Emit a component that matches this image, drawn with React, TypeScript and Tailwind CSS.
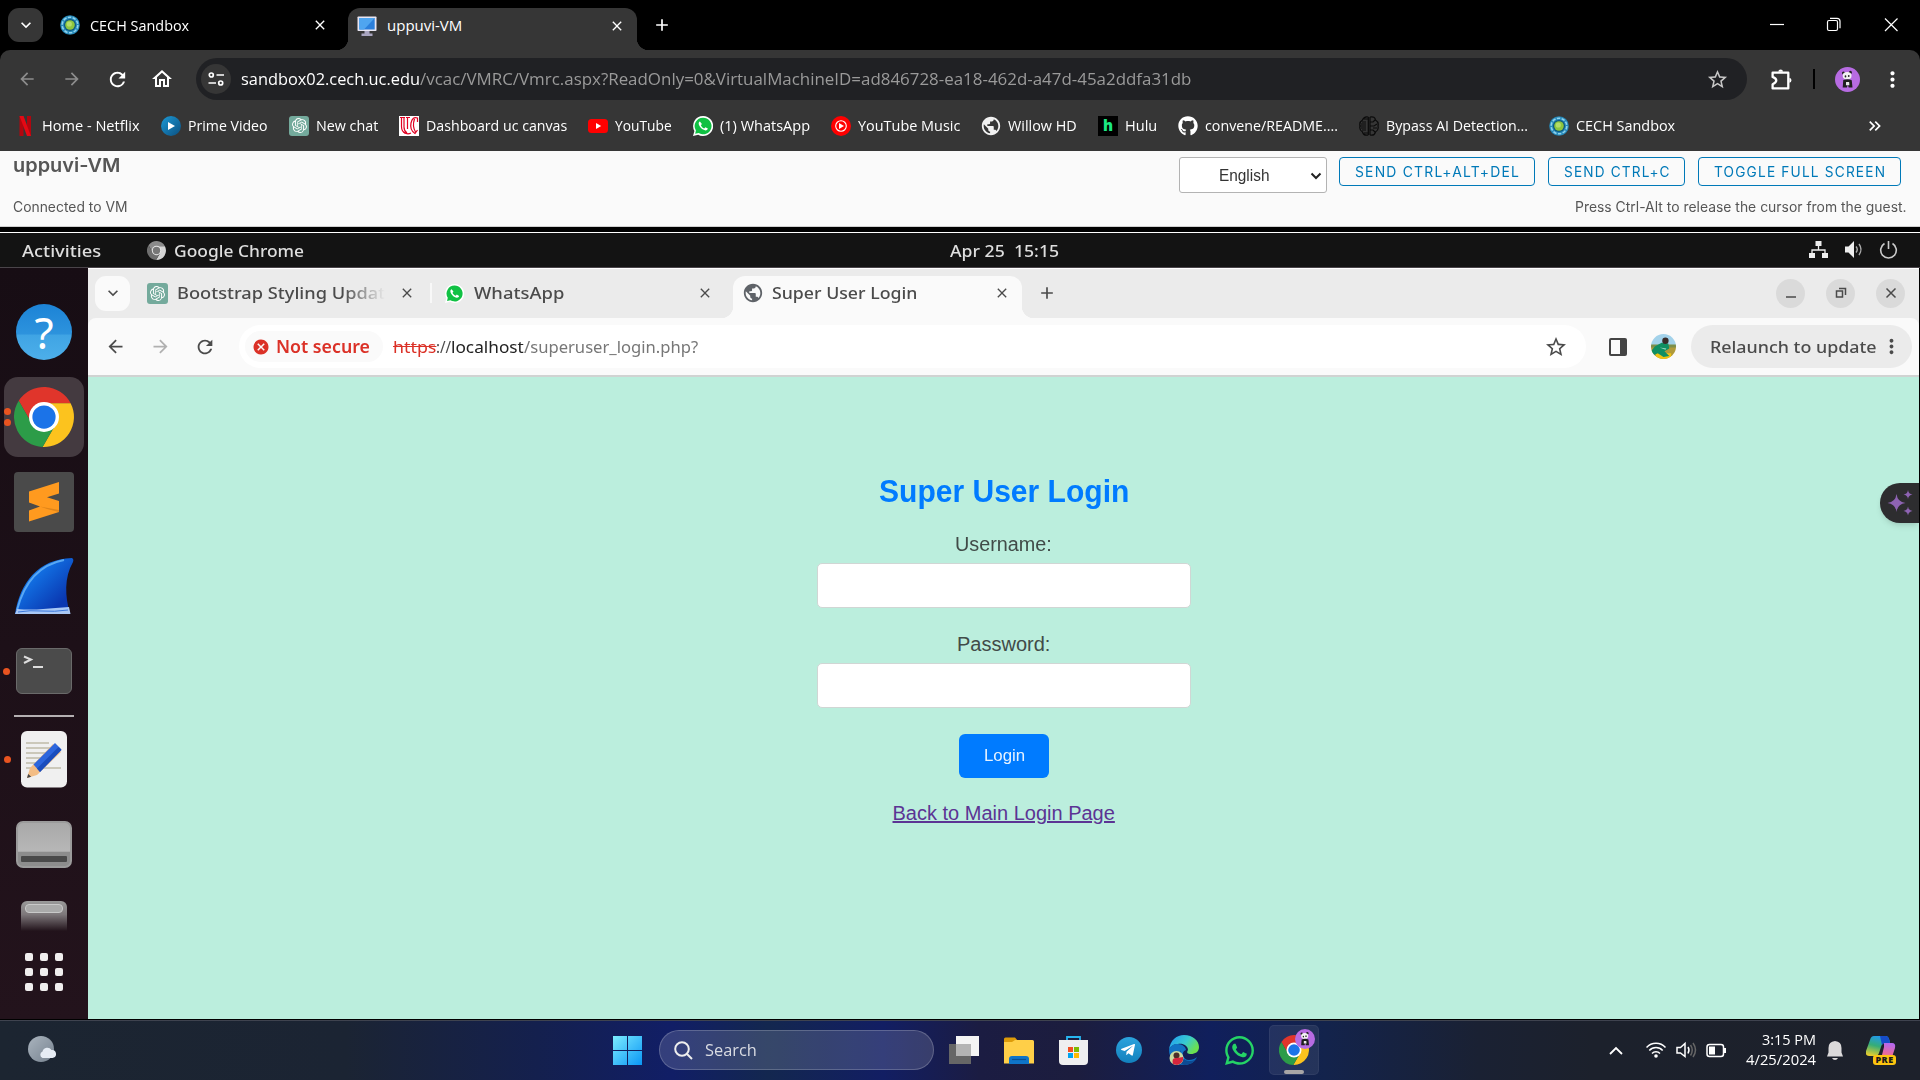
import React, { useLayoutEffect, useRef, useState } from "react";
import {
  MdArrowBack,
  MdArrowForward,
  MdRefresh,
  MdOutlineHome,
  MdStarBorder,
  MdMoreVert,
  MdClose,
  MdAdd,
  MdPublic,
  MdKeyboardArrowDown,
  MdCancel,
  MdKeyboardDoubleArrowRight,
} from "react-icons/md";
import { SiOpenai } from "react-icons/si";
import { FaGithub, FaWhatsapp, FaTelegramPlane } from "react-icons/fa";

/* One line of text, condensed or widened to the given width. */
function T({ w, className = "", children }: { w: number; className?: string; children: React.ReactNode }) {
  const ref = useRef<HTMLSpanElement>(null);
  const [s, setS] = useState(1);
  useLayoutEffect(() => {
    if (ref.current) setS(w / ref.current.offsetWidth);
  }, [w]);
  return (
    <span className={"block shrink-0 whitespace-pre " + className} style={{ width: w }}>
      <span ref={ref} className="inline-block origin-left" style={{ transform: `scaleX(${s})` }}>
        {children}
      </span>
    </span>
  );
}

function ChromeLogo({ className, mono }: { className: string; mono?: boolean }) {
  return (
    <svg viewBox="0 0 48 48" className={className}>
      <path d="M45.3 13A24 24 0 0 0 3.8 11.03L14.47 29.5 24 24V13Z" fill={mono ? "#8b8b8b" : "#e0352b"} />
      <path d="M45.3 13A24 24 0 0 1 22.87 47.97L33.5 29.5 24 24V13Z" fill={mono ? "#d5d5d5" : "#fcc31e"} />
      <path d="M22.87 47.97A24 24 0 0 1 3.8 11.03L14.47 29.5 24 24 33.5 29.5Z" fill={mono ? "#6f6f6f" : "#2c9c48"} />
      <circle cx="24" cy="24" r="12" fill={mono ? "#e8e8e8" : "#fff"} />
      <circle cx="24" cy="24" r="9.3" fill={mono ? "#777" : "#1b73e8"} />
    </svg>
  );
}

function CechLogo() {
  return (
    <svg viewBox="0 0 20 20" className="size-5 shrink-0">
      <circle cx="10" cy="10" r="9.8" fill="#2588b8" />
      <circle cx="10" cy="10" r="7.8" fill="none" stroke="#8ed2ee" strokeWidth="1.6" strokeDasharray="3.5 1.4" />
      <circle cx="10" cy="10" r="6" fill="#0e567c" />
      <circle cx="10" cy="10" r="4.8" fill="#8dc63f" />
      <circle cx="9.3" cy="9" r="2.6" fill="#b4dc6a" />
    </svg>
  );
}

function Panda({ className }: { className: string }) {
  return (
    <svg viewBox="0 0 26 26" className={className}>
      <circle cx="13" cy="13" r="13" fill="#b76be2" />
      <circle cx="8.8" cy="6.3" r="1.6" fill="#222" />
      <circle cx="16" cy="5.6" r="1.6" fill="#222" />
      <ellipse cx="12.6" cy="9.2" rx="4.6" ry="3.9" fill="#f2f2f2" />
      <ellipse cx="10.9" cy="9.8" rx="0.9" ry="1.1" fill="#222" />
      <ellipse cx="14.3" cy="9.3" rx="0.9" ry="1.1" fill="#222" />
      <path d="M8.6 13.600q5-2 8.800.2l.8 7.400h-4l-.8-3-1 3H8z" fill="#1f1f1f" />
      <path d="M11.500 15.500h3.200l.3 3.500h-3.600z" fill="#e8e8e8" />
    </svg>
  );
}

function WhatsBadge({ className }: { className: string }) {
  return (
    <svg viewBox="0 0 24 24" className={className}>
      <path d="M12 0a12 12 0 0 0-10.300 18L0 24l6.200-1.600A12 12 0 1 0 12 0Z" fill="#fff" />
      <path d="M12 2a10 10 0 0 0-8.500 15.300L2.600 21.400l4.200-1A10 10 0 1 0 12 2Z" fill="#10c143" />
      <path d="M8.300 6.500c-.8.2-1.600 1.300-1.500 2.600.3 3.800 4.600 7.900 8.300 8.200 1.400 0 2.500-.9 2.700-2.200l-2.900-1.700-1.400 1.500c-1.900-.8-3.300-2.200-4-3.900l1.200-1.500z" fill="#fff" />
    </svg>
  );
}

const Gpt = ({ className }: { className: string }) => (
  <span className={"flex shrink-0 items-center justify-center bg-[#74aa9c] text-white " + className}>
    <SiOpenai className="size-[15px]" />
  </span>
);

const bookmarks: { t: string; w: number; icon: React.ReactNode }[] = [
  {
    t: "Home - Netflix", w: 98,
    icon: (
      <svg viewBox="0 0 20 20" className="size-5 shrink-0">
        <path d="M4.500 0h4v20l-4 .2zM12 0h4v20.200l-4-.2z" fill="#b1060f" />
        <path d="M4.500 0h4L16 20.200l-4-.3z" fill="#e50914" />
      </svg>
    ),
  },
  {
    t: "Prime Video", w: 80,
    icon: (
      <svg viewBox="0 0 20 20" className="size-5 shrink-0">
        <defs>
          <linearGradient id="pv" x1="0" y1="0" x2="1" y2="1">
            <stop offset="0" stopColor="#1c9ad6" />
            <stop offset="1" stopColor="#0b4f80" />
          </linearGradient>
        </defs>
        <circle cx="10" cy="10" r="10" fill="url(#pv)" />
        <path d="M7 6l7 4-7 4z" fill="#fff" />
      </svg>
    ),
  },
  { t: "New chat", w: 62, icon: <Gpt className="size-5 rounded-[3px]" /> },
  {
    t: "Dashboard uc canvas", w: 141,
    icon: (
      <svg viewBox="0 0 20 20" className="size-5 shrink-0">
        <path d="M0 0h20v20H0z" fill="#fff" />
        <path d="M2.500 1.500v9q0 5 4 7M5 2v9q0 4 3 6M8.500 2v11M1 1.500h5M7 1.500h4" fill="none" stroke="#e00122" strokeWidth="1.200" />
        <path d="M18.500 6V2q-5-2-6.500 5T16 17.500l2.500-3.500M15.500 3q-2.500 7 1 13M5 16q3 3 7 1" fill="none" stroke="#e00122" strokeWidth="1.200" />
      </svg>
    ),
  },
  {
    t: "YouTube", w: 57,
    icon: (
      <svg viewBox="0 0 20 20" className="size-5 shrink-0">
        <rect x="0" y="3" width="20" height="14" rx="3.500" fill="#f00" />
        <path d="M8 7l5.200 3L8 13z" fill="#fff" />
      </svg>
    ),
  },
  { t: "(1) WhatsApp", w: 90, icon: <WhatsBadge className="size-5 shrink-0" /> },
  {
    t: "YouTube Music", w: 102,
    icon: (
      <svg viewBox="0 0 20 20" className="size-5 shrink-0">
        <circle cx="10" cy="10" r="10" fill="#f00" />
        <circle cx="10" cy="10" r="5.300" fill="none" stroke="#fff" strokeWidth="1.100" />
        <path d="M8 7l5 3-5 3z" fill="#fff" />
      </svg>
    ),
  },
  { t: "Willow HD", w: 69, icon: <MdPublic className="-ml-px size-[22px] shrink-0 -mr-px text-[#f1f1f1]" /> },
  {
    t: "Hulu", w: 32,
    icon: (
      <span className="flex size-5 shrink-0 items-center justify-center bg-black font-['Open_Sans',sans-serif] text-[15px] leading-none font-extrabold text-[#1ce783]">
        h
      </span>
    ),
  },
  { t: "convene/README....", w: 133, icon: <FaGithub className="size-5 shrink-0 text-white" /> },
  {
    t: "Bypass AI Detection...", w: 142,
    icon: (
      <svg viewBox="0 0 20 20" className="size-5 shrink-0" fill="none" stroke="#0b0b0b" strokeWidth="1.200">
        <path d="M9.300 1v18M9.300 1Q5 0 3.500 4 0 6 1 10q-1 4 2.500 6 1 4 5.800 3M3 6h4M1 10h6M3 14h4M5 3h4M5 17h4M2 8h5M2 12h5" />
        <path d="M11 1v18M11 1q5-1 5.500 3 3.500 2 2.500 6 1 4-2.500 6-1 4-5.500 3M11 6h3l2-2M11 10h4l3-2M11 14h3l2 2M14 12h4" />
      </svg>
    ),
  },
  { t: "CECH Sandbox", w: 99, icon: <CechLogo /> },
];

function HostBrowser() {
  return (
    <header className="h-[151px] bg-black font-['Open_Sans',sans-serif] text-white">
      <div className="flex h-[50px] items-center">
        <button className="ml-2 flex h-[34px] w-[35px] items-center justify-center rounded-[11px] bg-[#363636]">
          <MdKeyboardArrowDown className="size-5" />
        </button>
        <div className="ml-[17px] flex w-[274px] items-center">
          <CechLogo />
          <T w={99} className="ml-[10px] text-[15px]">CECH Sandbox</T>
          <MdClose className="ml-[123px] size-4 shrink-0" />
        </div>
        <div className="relative ml-[14px] mt-2 flex h-[42px] w-[289px] items-center rounded-t-[12px] bg-[#363636] pb-[7px]">
          <span className="absolute -left-3 bottom-0 size-3 bg-[radial-gradient(circle_at_0_0,transparent_12px,#363636_12.500px)]" />
          <span className="absolute -right-3 bottom-0 size-3 bg-[radial-gradient(circle_at_100%_0,transparent_12px,#363636_12.500px)]" />
          <svg viewBox="0 0 20 20" className="ml-[9px] size-5 shrink-0">
            <rect x="0.500" y="0.500" width="19" height="14.500" rx="0.800" fill="#e9e6f2" />
            <rect x="2.300" y="2" width="15.400" height="11.500" fill="#2b7fdc" />
            <path d="M2.300 2h15.400L7 13.500H2.300z" fill="#4fa5f0" />
            <path d="M7.500 15h5v2.500h3V20h-11v-2.500h3z" fill="#a9a5c0" />
          </svg>
          <T w={75} className="ml-[10px] text-[15px]">uppuvi-VM</T>
          <MdClose className="ml-[147px] size-4 shrink-0" />
        </div>
        <MdAdd className="ml-[15px] size-5" />
        <svg viewBox="0 0 140 20" className="ml-auto mr-[20px] h-5 w-[140px]" fill="none" stroke="#fff" strokeWidth="1.200">
          <path d="M10 9.500h14" />
          <rect x="67.500" y="5.500" width="10" height="10" rx="1.500" />
          <path d="M70 3.300h7q3 0 3 3v7" />
          <path d="M125 3.500l12.500 12.500M137.500 3.500L125 16" />
        </svg>
      </div>
      <div className="h-[101px] rounded-t-[10px] bg-[#363636]">
        <div className="flex h-[58px] items-center">
          <MdArrowBack className="ml-[17px] size-5 text-[#8d8d8d]" />
          <MdArrowForward className="ml-[25px] size-5 text-[#8d8d8d]" />
          <MdRefresh className="ml-[24px] size-[23px]" />
          <MdOutlineHome className="ml-[21px] size-[24px]" />
          <div className="ml-[22px] flex h-[42px] w-[1551px] items-center rounded-full bg-[#202124]">
            <span className="ml-[5px] flex size-[30px] items-center justify-center rounded-full bg-[#363636]">
              <svg viewBox="0 0 18 18" className="size-[18px]" fill="none" stroke="#fff" strokeWidth="1.700">
                <circle cx="4.300" cy="5" r="2" />
                <path d="M9.500 5H17M1.500 13H9" />
                <circle cx="13.700" cy="13" r="2" />
              </svg>
            </span>
            <T w={179} className="ml-[10px] text-[17px]">sandbox02.cech.uc.edu</T>
            <T w={771} className="text-[17px] text-[#9a9a9a]">
              /vcac/VMRC/Vmrc.aspx?ReadOnly=0&amp;VirtualMachineID=ad846728-ea18-462d-a47d-45a2ddfa31db
            </T>
            <MdStarBorder className="ml-auto mr-[18px] size-[23px] text-[#c7c7c7]" />
          </div>
          <svg viewBox="0 0 22 22" className="ml-[23px] size-[23px]" fill="none" stroke="#fff" strokeWidth="2.200" strokeLinejoin="round">
            <path d="M2.500 4.500H17.500V19.500H2.500V15.500Q6 14 6 12T2.500 8.500Z" />
            <path d="M8 3.500a2.200 2 0 0 1 4.400 0zM18.500 9.500a2 2.200 0 0 1 0 4.500z" fill="#fff" stroke="none" />
          </svg>
          <span className="ml-[20px] h-5 w-[2px] bg-black" />
          <Panda className="ml-[20px] size-[25px]" />
          <MdMoreVert className="ml-[20px] size-[25px]" />
        </div>
        <div className="flex h-[35px] items-center gap-[21px] pl-[15px] text-[15px]">
          {bookmarks.map((b) => (
            <span key={b.t} className="flex items-center gap-[7px]">
              {b.icon}
              <T w={b.w}>{b.t}</T>
            </span>
          ))}
          <MdKeyboardDoubleArrowRight className="ml-auto mr-[35px] size-5" />
        </div>
      </div>
    </header>
  );
}

function VmHeader() {
  const btn = "flex h-[29px] items-center rounded-[4px] border border-[#0079b8] pl-[15px]";
  return (
    <section className="flex h-[76px] justify-between border-b border-[#cfcfcf] bg-[#fafafa] pl-[13px] pr-[13px] font-['Inter',sans-serif] text-[#565656]">
      <div className="flex flex-col">
        <T w={107} className="mt-px h-7 text-[19px] leading-7 font-semibold">uppuvi-VM</T>
        <T w={115} className="mt-[17px] text-[14px] leading-5">Connected to VM</T>
      </div>
      <div className="flex flex-col items-end pt-[6px]">
        <div className="mr-[6px] flex h-[36px] items-start text-[#0079b8]">
          <div className="flex h-[36px] w-[148px] items-center rounded-[3px] border border-[#b3b3b3] bg-white pl-[39px] text-[#333]">
            <T w={50} className="mt-[2px] font-['Liberation_Sans',sans-serif] text-[16px]">English</T>
            <svg viewBox="0 0 12 8" className="ml-auto mr-1 mt-[2px] h-2 w-3" fill="none" stroke="#222" strokeWidth="2">
              <path d="M1.500 1.500L6 6l4.500-4.500" />
            </svg>
          </div>
          <button className={btn + " ml-3 w-[196px]"}>
            <T w={165} className="text-left text-[14px] tracking-[1.200px]">SEND CTRL+ALT+DEL</T>
          </button>
          <button className={btn + " ml-[13px] w-[137px]"}>
            <T w={107} className="text-left text-[14px] tracking-[1.200px]">SEND CTRL+C</T>
          </button>
          <button className={btn + " ml-[13px] w-[203px]"}>
            <T w={172} className="text-left text-[14px] tracking-[1.200px]">TOGGLE FULL SCREEN</T>
          </button>
        </div>
        <T w={332} className="mt-1 text-[14px] leading-5">Press Ctrl-Alt to release the cursor from the guest.</T>
      </div>
    </section>
  );
}

function UbuntuBar() {
  return (
    <div className="flex h-[35px] items-center border-b border-[#4a454a] bg-[#131313] font-['Noto_Sans',sans-serif] text-[17px] leading-none font-medium text-[#dedede]">
      <T w={79} className="ml-[22px]">Activities</T>
      <ChromeLogo mono className="ml-[46px] size-[19px]" />
      <T w={130} className="ml-[8px]">Google Chrome</T>
      <T w={109} className="ml-[646px]">Apr 25  15:15</T>
      <svg viewBox="0 0 92 20" className="ml-auto mr-[19px] h-5 w-[92px]" fill="#eee">
        <path d="M6.500 1h6v5h-6zM0 13h6v5H0zM13 13h6v5h-6z" />
        <path d="M9.500 6v4M3 13v-3h13v3" fill="none" stroke="#eee" strokeWidth="1.300" />
        <path d="M36 6.500h3.500L45 1v17l-5.500-5.500H36z" />
        <path d="M47 6.500q2.500 3 0 6M50 4q4 5.500 0 11" fill="none" stroke="#aaa" strokeWidth="1.400" />
        <path d="M75.500 3.500a7.800 7.800 0 1 0 8 0M79.500 1v8" fill="none" stroke="#ccc" strokeWidth="1.600" />
      </svg>
    </div>
  );
}

function Dock() {
  return (
    <nav className="flex h-[751px] w-[88px] shrink-0 flex-col items-center bg-linear-to-b from-[#170d14] to-[#23131c]">
      <div className="mt-[36px] flex size-14 shrink-0 items-center justify-center rounded-full bg-[linear-gradient(#1c83d6_0%,#2d93dd_54%,#3fa4e4_55%,#4dafea_100%)] font-['Noto_Sans',sans-serif] text-[44px] leading-none text-white">
        ?
      </div>
      <div className="relative mt-[17px] flex size-20 shrink-0 items-center justify-center rounded-[14px] bg-[#443a40]">
        <span className="absolute left-0 top-[31px] size-[7px] rounded-full bg-[#e95420]" />
        <span className="absolute left-0 top-[42px] size-[7px] rounded-full bg-[#e95420]" />
        <ChromeLogo className="size-[60px]" />
      </div>
      <svg viewBox="0 0 60 60" className="mt-[15px] size-[60px] shrink-0">
        <rect width="60" height="60" rx="4" fill="#4a4a4a" />
        <path d="M15 19.500L45 10v11.500L33 25.200 45 29v11L15 49.500V38.500l11-4L15 30.500z" fill="#ff9a1f" />
        <path d="M26 34.500L33 37l12 3V38z" fill="#e0851a" />
      </svg>
      <svg viewBox="0 0 60 58" className="mt-[25px] h-[58px] w-[60px] shrink-0">
        <defs>
          <linearGradient id="fin" x1="0" y1="0" x2="1" y2="1">
            <stop offset="0.300" stopColor="#1273e6" />
            <stop offset="0.800" stopColor="#0a37b0" />
          </linearGradient>
        </defs>
        <path d="M1 57C6 26 24 2 58 1q2 1 1 4c-9 16-8 34-3 52z" fill="url(#fin)" />
        <path d="M3 53C10 26 24 8 50 3" fill="none" stroke="#58a8f4" strokeWidth="2" />
        <path d="M1 57l2-5q14 1 26 0t26-2l1.500 7z" fill="#a9c8f5" />
        <path d="M4 55q12-2 24-1t26-1" fill="none" stroke="#3b78dc" strokeWidth="1" />
      </svg>
      <div className="relative mt-[33px] h-[46px] w-14 shrink-0 rounded-[6px] border border-[#6a6a6a] bg-[#4b4b4b]">
        <span className="absolute -left-[14px] top-[19px] size-[7px] rounded-full bg-[#e95420]" />
        <svg viewBox="0 0 24 16" className="ml-[6px] mt-[6px] h-4 w-6" fill="none" stroke="#ddd" strokeWidth="2">
          <path d="M1 1.500l7 3-7 3.500M10 12h10" />
        </svg>
      </div>
      <div className="mt-[21px] h-[2px] w-[60px] shrink-0 bg-[#b5b0b2]" />
      <div className="relative mt-[14px] shrink-0">
        <span className="absolute -left-[17px] top-[25px] size-[7px] rounded-full bg-[#e95420]" />
        <svg viewBox="0 0 46 57" className="h-[57px] w-[46px]">
          <rect width="46" height="56.500" rx="6" fill="#f0f0f0" />
          <path d="M5 12h23M5 17h26M5 22h24M5 27h18M5 32h14M5 37h35" stroke="#cbc8ba" strokeWidth="2.200" />
          <path d="M6 47l3-10L32 13l8 8-24 23z" fill="#f3bd85" />
          <path d="M12.500 33.500L34 12l6.500 6.500L19 41z" fill="#2d66dd" />
          <path d="M16 37.500L37.500 16l3 3L19 41z" fill="#1a4dbd" />
          <path d="M6 47l1.200-4 3 2.800z" fill="#444" />
        </svg>
      </div>
      <div className="mt-[33px] flex h-[47px] w-14 shrink-0 flex-col justify-end rounded-[7px] border-2 border-[#9b9b9b] bg-[linear-gradient(#a9a9a9_0%,#b7b7b7_66%,#8d8d8d_67%)] px-[3px] pb-[4px]">
        <span className="h-[6px] rounded-[1px] bg-[#4a4a4a]" />
      </div>
      <div className="mt-[33px] h-[30px] w-[46px] shrink-0 rounded-t-[6px] bg-[linear-gradient(#9a9a9a,#7d777a_45%,#22131b)] px-[4px] pt-[3px]">
        <div className="h-[9px] rounded-[4px] border border-[#c9c9c9] bg-[#aaa]" />
      </div>
      <div className="mt-[22px] grid shrink-0 grid-cols-3 gap-[7px]">
        {Array.from({ length: 9 }, (_, i) => (
          <span key={i} className="size-2 rounded-[2px] bg-[#f0eeee]" />
        ))}
      </div>
    </nav>
  );
}

function GuestBrowser() {
  return (
    <div className="flex w-[1831px] flex-col border-t border-white font-['Noto_Sans',sans-serif] text-[17px] font-medium text-[#4b4b4b]">
      <div className="flex h-[49px] items-center bg-[#ebebeb] pb-px">
        <span className="ml-[7px] flex size-[35px] shrink-0 items-center justify-center rounded-[11px] bg-[#fafafa]">
          <MdKeyboardArrowDown className="size-5" />
        </span>
        <Gpt className="ml-[17px] size-[21px] rounded-[3px]" />
        <T w={208} className="ml-[9px] mask-r-from-80% mask-r-to-100%">Bootstrap Styling Updat</T>
        <MdClose className="ml-[14px] size-4 shrink-0" />
        <span className="ml-[15px] h-5 w-[2px] bg-[#f8f8f8]" />
        <WhatsBadge className="ml-[13px] mr-px size-[19px] shrink-0" />
        <T w={90} className="ml-[9px]">WhatsApp</T>
        <MdClose className="ml-[133px] size-4 shrink-0" />
        <div className="relative ml-[20px] mt-[8px] flex h-[42px] w-[289px] items-center rounded-t-[12px] bg-[#fafafa] pb-[8px]">
          <span className="absolute -left-3 bottom-0 size-3 bg-[radial-gradient(circle_at_0_0,transparent_12px,#fafafa_12.500px)]" />
          <span className="absolute -right-3 bottom-0 size-3 bg-[radial-gradient(circle_at_100%_0,transparent_12px,#fafafa_12.500px)]" />
          <MdPublic className="ml-[9px] size-[22px] shrink-0 text-[#5f6368]" />
          <T w={145} className="ml-[8px]">Super User Login</T>
          <MdClose className="ml-[77px] size-4 shrink-0" />
        </div>
        <MdAdd className="ml-[15px] size-5" />
        <div className="ml-auto mr-[14px] flex gap-[21px]">
          {["M5 14h10", "M5.500 8h6v6h-6zM8 5.500h6.500v6.500", "M5.500 5.500l9 9M14.500 5.500l-9 9"].map((d) => (
            <span key={d} className="flex size-[29px] items-center justify-center rounded-full bg-[#dadada]">
              <svg viewBox="0 0 20 20" className="size-5" fill="none" stroke="#4a4a4a" strokeWidth="1.500">
                <path d={d} />
              </svg>
            </span>
          ))}
        </div>
      </div>
      <div className="bg-[#ebebeb]">
        <div className="flex h-[59px] items-center rounded-t-[8px] border-b-2 border-[#d0d3d2] bg-[#fafafa]">
          <MdArrowBack className="ml-[17px] size-[21px]" />
          <MdArrowForward className="ml-[24px] size-[21px] text-[#b0b0b0]" />
          <MdRefresh className="ml-[23px] size-[22px]" />
          <div className="ml-[23px] flex h-[43px] w-[1347px] items-center rounded-full bg-white">
            <span className="ml-[6px] flex h-[31px] w-[138px] items-center rounded-full bg-[#fafafa] text-[#db3127]">
              <MdCancel className="ml-[7px] size-[18px]" />
              <T w={94} className="ml-[6px] font-semibold">Not secure</T>
            </span>
            <T w={43} className="ml-[10px] font-normal text-[#db3127] [&>span]:line-through">https</T>
            <T w={15} className="font-normal">://</T>
            <T w={73} className="font-normal text-[#222]">localhost</T>
            <T w={174} className="font-normal text-[#777]">/superuser_login.php?</T>
            <MdStarBorder className="ml-auto mr-[18px] size-[24px]" />
          </div>
          <svg viewBox="0 0 18 18" className="ml-[23px] size-[18px]">
            <rect x="1" y="1" width="16" height="16" rx="1" fill="none" stroke="#444" strokeWidth="2" />
            <path d="M11 1h6v16h-6z" fill="#444" />
          </svg>
          <svg viewBox="0 0 26 26" className="ml-[24px] size-[25px]">
            <clipPath id="av">
              <circle cx="13" cy="13" r="13" />
            </clipPath>
            <g clipPath="url(#av)">
              <path d="M0 0h26v12H0z" fill="#a3d2ea" />
              <path d="M0 12h26v14H0z" fill="#b09a3a" />
              <path d="M0 11h26v3H0z" fill="#7d8f4a" />
              <path d="M5 20h16v6H5z" fill="#f0c313" />
              <path d="M0 18l4-5 7-4 7 1 1 5-5 3 5 5-6 1-6-4-6 3z" fill="#0f8f62" />
              <circle cx="15" cy="7" r="3.300" fill="#3a2b28" />
              <path d="M9 14l7 1-1 1.500z" fill="#9fdcc5" />
            </g>
          </svg>
          <span className="ml-[15px] flex h-[43px] w-[221px] items-center rounded-full bg-[#ebebeb]">
            <T w={167} className="ml-[19px]">Relaunch to update</T>
            <MdMoreVert className="ml-[3px] size-[23px]" />
          </span>
        </div>
      </div>
      <LoginPage />
    </div>
  );
}

function LoginPage() {
  const field = "h-[45px] w-[374px] shrink-0 rounded-[5px] border border-[#d0d6d4] bg-white";
  return (
    <main className="flex h-[642px] flex-col items-center bg-[#bbeedd] pt-[95px] font-['Liberation_Sans',sans-serif] text-[20px] font-normal text-[#414b48]">
      <h1 className="text-[#007bff]">
        <T w={250} className="text-[31px] leading-10 font-bold">Super User Login</T>
      </h1>
      <label className="mt-[20px]">
        <T w={97} className="leading-6">Username:</T>
      </label>
      <input className={field + " mt-[7px]"} />
      <label className="mt-[24px]">
        <T w={93} className="leading-6">Password:</T>
      </label>
      <input type="password" className={field + " mt-[7px]"} />
      <button className="mt-[26px] flex h-[44px] w-[90px] shrink-0 items-center justify-center rounded-[6px] bg-[#007bff] text-[#e6f2ff]">
        <T w={41} className="text-[16px]">Login</T>
      </button>
      <a className="mt-[23px] text-[#5b3494]">
        <T w={222} className="leading-6 [&>span]:underline">Back to Main Login Page</T>
      </a>
    </main>
  );
}

function Taskbar() {
  return (
    <footer className="flex h-[60px] items-center border-t border-[#3f434f] bg-[linear-gradient(90deg,#1c2531_0%,#1b2433_18%,#14204e_28%,#111e66_35%,#13274f_40%,#121e63_46%,#1b1c42_51%,#1c1d3e_56%,#101f5c_63%,#13234c_69%,#1a2133_77%,#1c212c_83%,#1d212b_100%)] pb-px font-['Open_Sans',sans-serif] text-white">
      <svg viewBox="0 0 28 28" className="ml-[28px] size-7">
        <defs>
          <linearGradient id="moon" x1="0" y1="0" x2="1" y2="1">
            <stop offset="0" stopColor="#aab4be" />
            <stop offset="1" stopColor="#76828f" />
          </linearGradient>
        </defs>
        <circle cx="13" cy="13" r="13" fill="url(#moon)" />
        <path d="M14.500 22a3.500 3.500 0 0 1 0-6.500 5 5 0 0 1 9-1.500 4 4 0 0 1 1 8z" fill="#e6ecf4" />
      </svg>
      <svg viewBox="0 0 29 29" className="ml-[557px] size-[29px]">
        <defs>
          <linearGradient id="win" x1="0" y1="0" x2="29" y2="29" gradientUnits="userSpaceOnUse">
            <stop offset="0" stopColor="#7cecff" />
            <stop offset="1" stopColor="#0a96f5" />
          </linearGradient>
        </defs>
        <path d="M0 0h14v14H0zM15 0h14v14H15zM0 15h14v14H0zM15 15h14v14H15z" fill="url(#win)" />
      </svg>
      <div className="ml-[17px] flex h-10 w-[275px] items-center rounded-full border border-white/20 bg-white/15">
        <svg viewBox="0 0 19 19" className="ml-[14px] size-[19px]" fill="none" stroke="#eee" strokeWidth="2">
          <circle cx="8" cy="8" r="6.800" />
          <path d="M13 13l5 5" />
        </svg>
        <T w={52} className="ml-[12px] text-[17px] text-[#d9dbe2]">Search</T>
      </div>
      <svg viewBox="0 0 30 28" className="ml-[15px] h-7 w-[30px]">
        <path d="M7 0h23v20H7z" fill="#f4f4f4" />
        <path d="M0 8h22v20H0z" fill="#666" />
        <path d="M7 8h15v12H7z" fill="#b4b4b4" />
      </svg>
      <svg viewBox="0 0 30 27" className="ml-[25px] h-[27px] w-[30px]">
        <path d="M0 2q0-1.500 1.500-1.500H11l3 3.500h-3L8 8H0z" fill="#dd9b09" />
        <path d="M0 5h8l3-2h17.500Q30 3 30 4.500V26.500H0z" fill="#ffcf48" />
        <path d="M5 27v-5q0-3 3-3h14q3 0 3 3v5z" fill="#0f74c8" />
        <path d="M8 22.500h14" stroke="#0a4f92" strokeWidth="1.200" />
      </svg>
      <svg viewBox="0 0 29 29" className="ml-[25px] size-[29px]">
        <path d="M8 5V1h13v4" fill="none" stroke="#27b6f1" strokeWidth="1.800" />
        <path d="M0 4h29v21q0 4-4 4H4q-4 0-4-4z" fill="#efefef" />
        <path d="M9 11h5v5H9z" fill="#f25022" />
        <path d="M15 11h5v5h-5z" fill="#7fba00" />
        <path d="M9 17h5v5H9z" fill="#00a4ef" />
        <path d="M15 17h5v5h-5z" fill="#ffb900" />
      </svg>
      <span className="ml-[28px] flex size-[26px] items-center justify-center rounded-full bg-linear-to-b from-[#2ba3dd] to-[#1281bd]">
        <FaTelegramPlane className="-ml-[2px] size-4" />
      </span>
      <svg viewBox="0 0 30 30" className="ml-[27px] size-[30px]">
        <defs>
          <linearGradient id="ed" x1="0" y1="0" x2="1" y2="0.500">
            <stop offset="0.200" stopColor="#27a9ea" />
            <stop offset="0.600" stopColor="#38cbd0" />
            <stop offset="1" stopColor="#6be04f" />
          </linearGradient>
        </defs>
        <path d="M0 15C1 5 8 0 15 0c9 0 15 6 15 12 0 5-4 7-8 7-3 0-5-1-3-4 0-4-5-7-10-6-5 0-8 3-9 6z" fill="url(#ed)" />
        <path d="M0 15c1-4 5-6.500 9-6 4 0 8 3 8 6-6 2-3 10 3 10 3 0 6-1 8-3-3 6-8 8-13 8C6 30 0 23 0 15z" fill="#1273c4" />
        <path d="M12 15c-2 5 2 11 9 11 3 0 5-1 7-3-3 5-8 7-13 7-5-1-8-9-3-15z" fill="#0d4b93" />
        <circle cx="7.500" cy="23" r="7" fill="#c9dca1" />
        <circle cx="7.500" cy="20.500" r="3" fill="#4b2d27" />
        <path d="M4 29q-2-7 4-6l6-1q1 6-6 8z" fill="#d6263d" />
      </svg>
      <FaWhatsapp className="ml-[24px] size-[33px] text-[#25d366]" />
      <div className="relative ml-[13px] flex h-[50px] w-[50px] items-center justify-center rounded-[5px] border border-white/5 bg-white/8">
        <ChromeLogo className="size-[30px]" />
        <Panda className="absolute right-[3px] top-[3px] size-5" />
        <span className="absolute bottom-0 left-[14px] h-1 w-5 rounded-full bg-[#a8a6a6]" />
      </div>
      <svg viewBox="0 0 14 9" className="ml-auto h-[9px] w-[14px]" fill="none" stroke="#fff" strokeWidth="1.800">
        <path d="M1 8l6-6 6 6" />
      </svg>
      <svg viewBox="0 0 80 20" className="ml-[23px] h-5 w-20" fill="none" stroke="#fff" strokeWidth="1.500">
        <path d="M.5 7.500a13 13 0 0 1 19 0M3.300 10.500a9 9 0 0 1 13.400 0M6 13.500a5.500 5.500 0 0 1 8 0" />
        <circle cx="10" cy="16" r="1.800" fill="#fff" stroke="none" />
        <path d="M31 7.500h3.500L39 3.500v13L34.500 13H31z" />
        <path d="M42 7q2 3 0 6.500" />
        <path d="M44.500 5q3.500 5 0 10.500M47 3q5 7 0 14" stroke="#666" />
        <rect x="61" y="4.500" width="16.500" height="12" rx="2.500" />
        <path d="M63 6.500h6v8h-6zM78 8h2v5h-2z" fill="#fff" stroke="none" />
      </svg>
      <div className="mb-[2px] ml-[20px] flex flex-col items-end text-[15px] leading-5">
        <T w={54}>3:15 PM</T>
        <T w={70}>4/25/2024</T>
      </div>
      <svg viewBox="0 0 16 19" className="ml-[11px] h-[19px] w-4" fill="#dcdadb">
        <path d="M8 0q6.500.5 6.500 7v4.500L16 15.500H0l1.500-4V7Q1.500.5 8 0zM5 17h6q-1 2-3 2t-3-2z" />
      </svg>
      <div className="relative ml-[23px] mr-[24px] h-[29px] w-[30px]">
        <svg viewBox="0 0 30 24" className="h-6 w-[30px]">
          <defs>
            <linearGradient id="cp1" x1="0.600" y1="0" x2="0.300" y2="1">
              <stop offset="0" stopColor="#2098f0" />
              <stop offset="0.500" stopColor="#35ad77" />
              <stop offset="1" stopColor="#e6cd2f" />
            </linearGradient>
            <linearGradient id="cp2" x1="0.500" y1="0" x2="0.300" y2="1">
              <stop offset="0" stopColor="#b568ee" />
              <stop offset="0.600" stopColor="#e96a9b" />
              <stop offset="1" stopColor="#f59a5f" />
            </linearGradient>
          </defs>
          <path d="M8 0h12q3 0 4 7h-5q-3 0-4 4l-2 6q-1 3-4 3H3q-4 0-3-5L4 4q1-4 4-4z" fill="url(#cp1)" />
          <path d="M14 0h6q3 0 4 7h-5q-2 0-3 2z" fill="#164cc8" />
          <path d="M18 7h8q4 0 3 5l-3 9q-1 3-4 3H11q4 0 5-5l2-8z" fill="url(#cp2)" />
        </svg>
        <span className="absolute bottom-0 left-[7px] flex h-[10px] w-[23px] items-center justify-center rounded-[3px] bg-[#fdc40f] text-[9px] leading-none font-extrabold tracking-[0.500px] text-[#1a1a1a]">
          PRE
        </span>
      </div>
    </footer>
  );
}

export default function App() {
  return (
    <div className="relative h-[1080px] w-[1920px] overflow-hidden bg-black leading-normal">
      <HostBrowser />
      <VmHeader />
      <div className="mt-[5px] h-px bg-white" />
      <UbuntuBar />
      <div className="flex h-[751px] border-r border-black">
        <Dock />
        <GuestBrowser />
      </div>
      <div className="h-px bg-black" />
      <Taskbar />
      <div className="absolute right-px top-[483px] flex h-10 w-[39px] items-center justify-center rounded-l-full bg-[#2d2d2f] shadow-md">
        <svg viewBox="0 0 26 26" className="size-[26px]" fill="#8e63b3">
          <path d="M9.500 4Q10.500 12 18.500 13 10.500 14 9.500 22 8.500 14 .5 13 8.500 12 9.500 4z" />
          <path d="M21 0Q21.500 4 25.500 4.500 21.500 5 21 9 20.500 5 16.500 4.500 20.500 4 21 0zM21 16.500Q21.500 20.500 25.500 21 21.500 21.500 21 25.500 20.500 21.500 16.500 21 20.500 20.500 21 16.500z" />
        </svg>
      </div>
    </div>
  );
}
